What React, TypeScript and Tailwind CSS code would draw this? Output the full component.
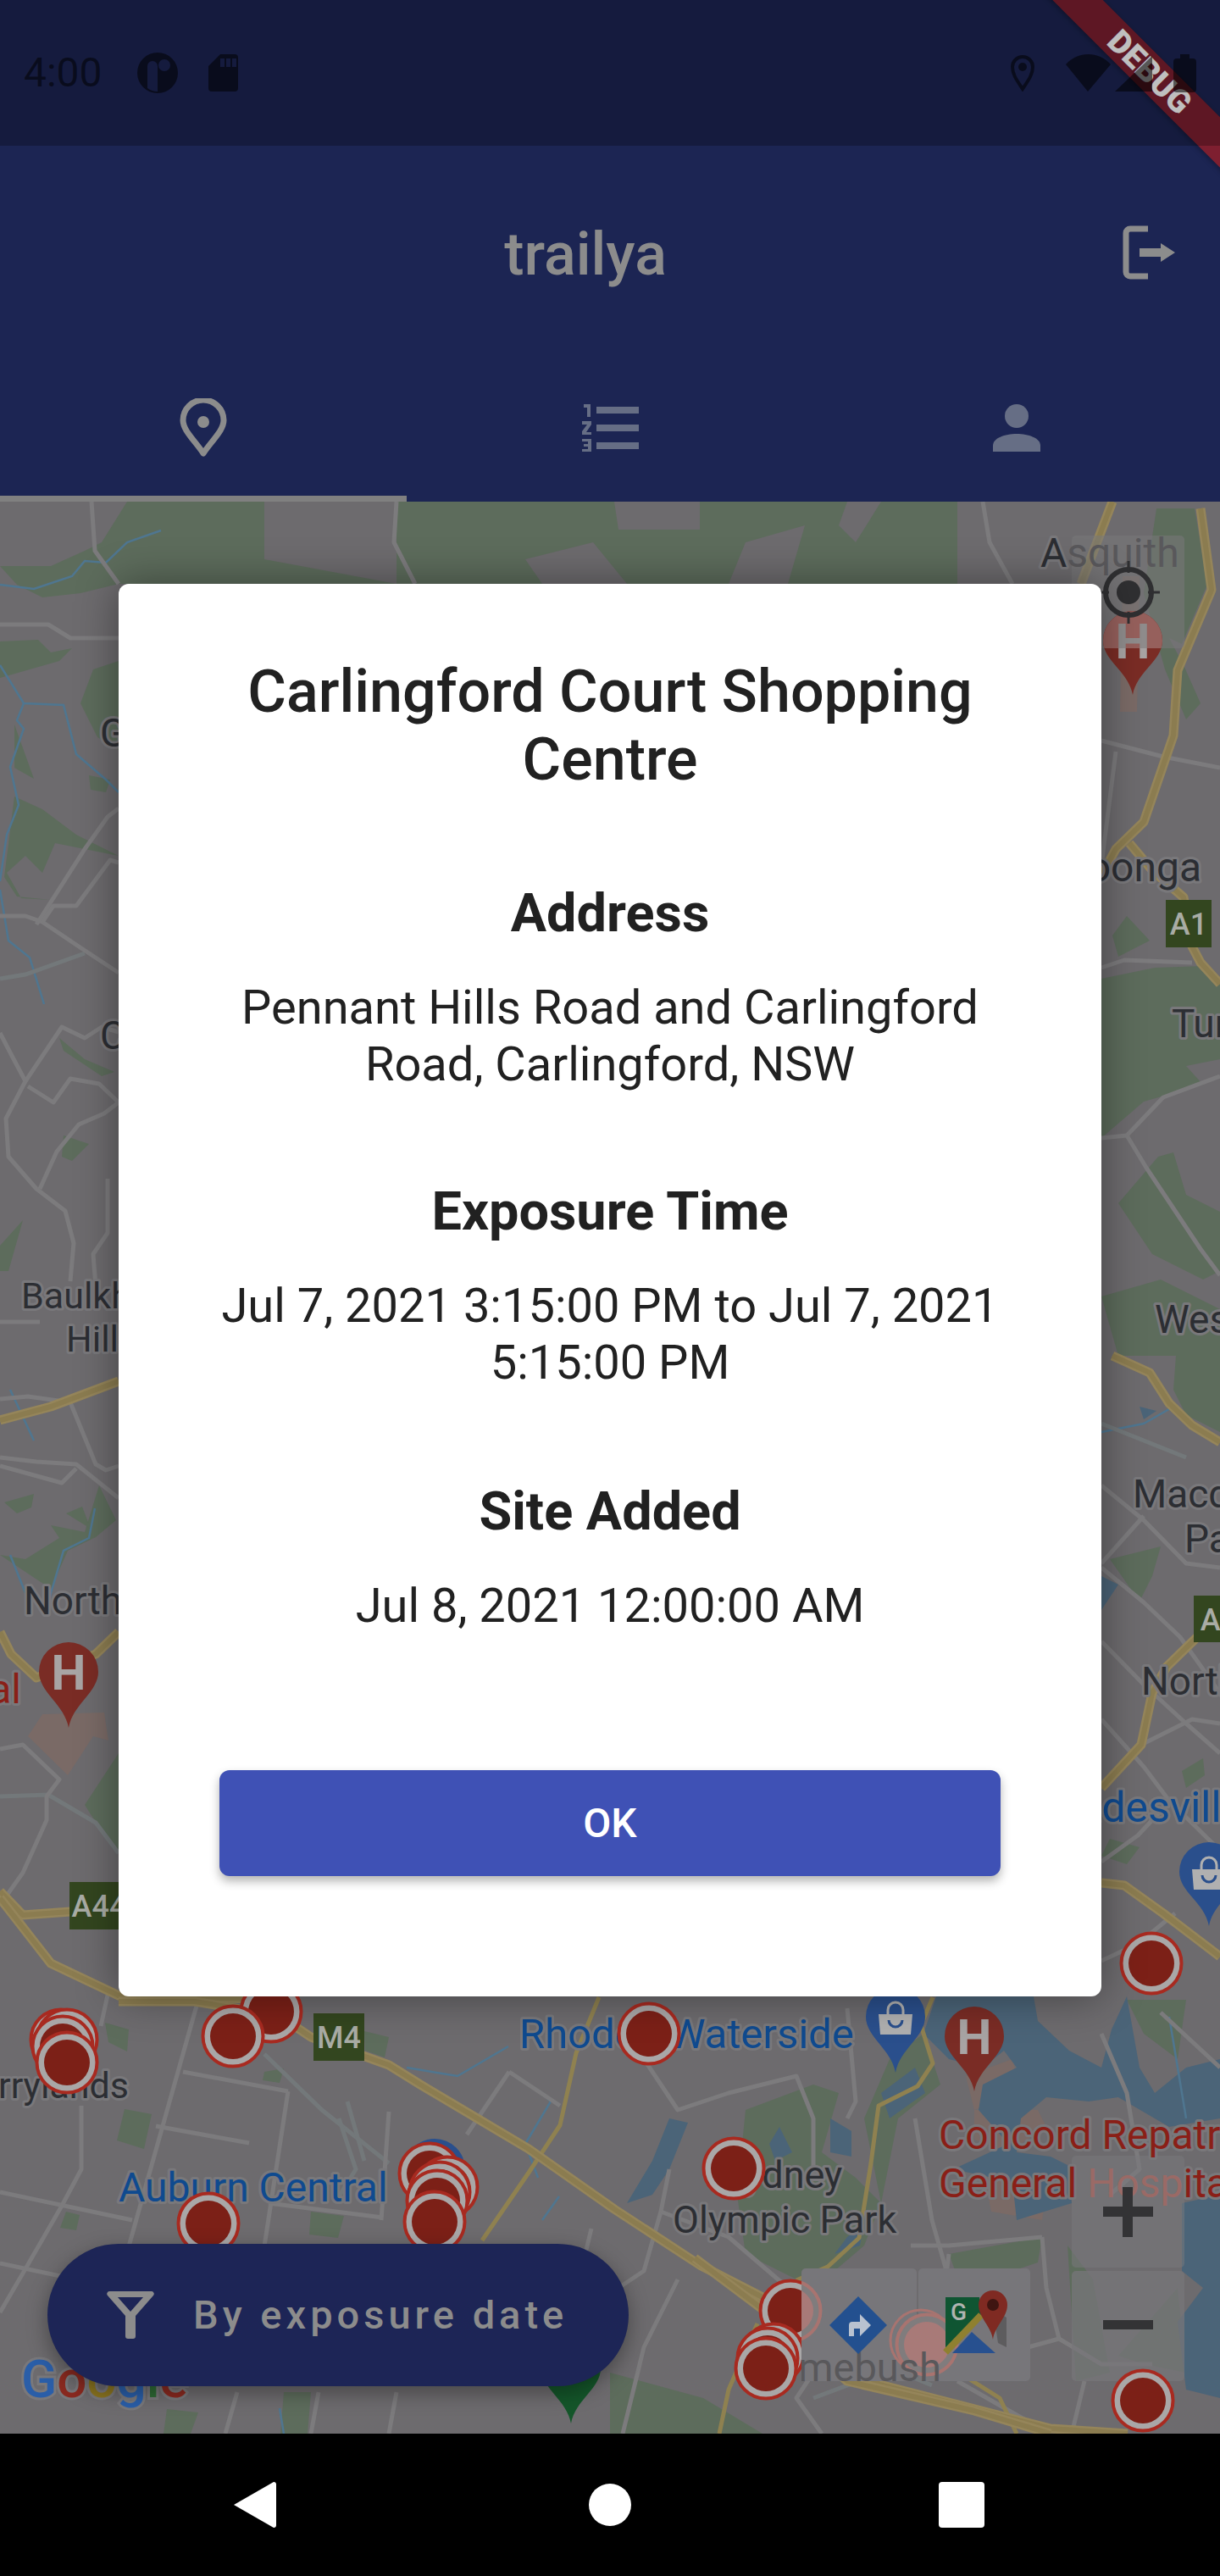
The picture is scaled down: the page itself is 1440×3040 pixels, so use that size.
const land = "#6d6b6e";
const road = "#7c7b7d";
const park = "#5d6c5c";
const water = "#4b6478";
const river = "#4f7690";
const hwyEdge = "#95855a";
const hwyFill = "#8b7c50";
const label = "#2c2e33";
const blueLabel = "#0f4a8f";
const redLabel = "#8a1f17";

const parks = [
  "150,592 312,592 312,660 468,689 140,689 95,700 50,705 20,690 0,668 60,668 100,650 120,640",
  "468,592 725,592 730,625 826,625 826,592 1130,592 1130,689 468,689",
  "0,757 45,755 60,770 85,765 70,780 35,790 0,800",
  "140,780 110,790 95,830 115,870 140,885",
  "17,855 40,919 17,906",
  "105,915 130,920 125,935 107,932",
  "17,940 50,955 90,985 140,1010 65,995 50,1030 30,1010 8,1030 25,1060 60,1062 20,1058 5,1035",
  "70,1225 100,1250 135,1265 120,1270 75,1240",
  "75,1340 105,1350 85,1370 73,1365",
  "0,1470 27,1440 10,1500 0,1500",
  "117,1753 137,1794 113,1814 80,1830 60,1875 0,1835 30,1840 70,1815 60,1800 100,1808",
  "5,1773 40,1763 37,1779 20,1786",
  "78,1786 97,1778 107,1804",
  "140,2069 100,2130 133,2182 140,2182",
  "1365,600 1410,600 1425,690 1395,760 1380,753 1397,785 1417,830 1400,849 1375,790 1350,700",
  "1313,1104 1330,1081 1357,1110 1320,1129",
  "1300,1155 1363,1142 1420,1140 1440,1160 1440,1250 1400,1258 1420,1280 1350,1300 1300,1343",
  "1367,1365 1385,1360 1400,1410 1440,1430 1440,1500 1420,1510 1360,1480 1320,1420",
  "1300,1530 1370,1510 1440,1545 1440,1600 1320,1600",
  "1388,1600 1440,1600 1440,1690 1400,1670 1385,1640",
  "1310,1840 1370,1825 1360,1860 1345,1890",
  "1395,2090 1420,2075 1422,2095 1400,2110",
  "1300,2190 1330,2200 1345,2180 1310,2170",
  "124,2387 152,2395 150,2421 128,2410",
  "147,2489 179,2495 170,2536 138,2526",
  "78,2610 94,2614 90,2632 71,2629",
  "367,2610 406,2615 399,2641 365,2637",
  "197,2843 234,2847 225,2872 193,2872",
  "335,2823 367,2823 363,2872 331,2872",
  "430,2397 459,2404 454,2428 431,2420",
  "312,2445 335,2441 330,2458 310,2455",
  "880,2490 960,2460 990,2470 970,2540 1010,2570 1040,2600 1020,2650 985,2680 940,2690 880,2660 870,2590",
  "1050,2430 1090,2400 1110,2460 1060,2500 1040,2600 1020,2500",
  "1120,2660 1230,2640 1225,2670 1135,2700",
  "1260,2650 1290,2690 1310,2800 1270,2810",
  "1320,2780 1390,2700 1400,2800 1350,2790",
  "720,2800 830,2830 900,2872 720,2872",
  "1330,2360 1400,2360 1390,2430 1350,2400",
];

// grey gaps in the bush along the top edge
const clearings = [
  "620,660 700,640 740,689 640,689",
  "880,640 950,620 930,689 860,689",
  "1000,592 1040,592 1010,640 990,620",
];

const waters = [
  "1105,2356 1220,2356 1225,2385 1262,2420 1300,2440 1312,2395 1330,2356 1345,2440 1363,2470 1400,2440 1440,2430 1440,2500 1380,2510 1320,2475 1285,2480 1235,2475 1205,2500 1200,2540 1240,2545 1260,2555 1265,2600 1200,2620 1195,2575 1125,2560 1190,2530 1155,2490 1160,2460 1200,2440 1185,2420 1160,2440 1120,2430 1090,2400",
  "1395,2600 1440,2590 1440,2830 1400,2820 1390,2740 1420,2700 1395,2680",
  "1040,2470 1080,2440 1092,2470 1050,2500",
  "980,2500 1005,2515 1005,2545 980,2540",
  "920,2510 935,2540 915,2550 908,2530",
  "790,2500 812,2505 790,2560 770,2590 740,2600 770,2550",
  "1000,2640 1020,2625 1015,2650 985,2660",
  "1300,1860 1320,1870 1300,1900",
  "1345,1660 1365,1665 1350,1675",
];

const pink = [
  "33,2049 50,2023 123,2021 128,2054 110,2049 80,2095",
  "1140,2450 1195,2430 1205,2470 1150,2490",
  "1150,2490 1225,2490 1235,2510 1190,2540 1150,2525",
  "1160,2560 1240,2550 1230,2620 1170,2610",
  "1325,680 1345,680 1342,840 1322,840",
];

const roads = [
  "0,737 57,737 83,753 140,753",
  "43,1091 100,1002 127,964 140,954",
  "0,1081 30,1081 50,1088 93,1117 140,1148",
  "50,1088 63,1069 90,1069 130,1015 140,1018",
  "0,1219 13,1244 30,1276 7,1320 10,1365 43,1403 77,1429 87,1467 83,1512",
  "30,1276 73,1212 100,1225 120,1212 140,1218",
  "33,1282 63,1301 83,1273 117,1279 140,1301",
  "47,1403 67,1359 93,1327 123,1314 140,1301",
  "127,1391 127,1455 110,1480 113,1518",
  "0,1560 47,1560",
  "0,1651 33,1648 83,1655 113,1728 125,1735 140,1730",
  "0,1720 43,1725 90,1728 140,1768",
  "0,1730 73,1750 90,1733",
  "0,2064 27,2059 70,2100 55,2120 55,2148 27,2210 0,2248",
  "108,592 112,650 140,689",
  "468,592 465,640 490,689",
  "1160,592 1168,640 1195,689",
  "1300,874 1373,893 1440,906",
  "1317,887 1300,1021",
  "1300,1142 1327,1133 1407,1136",
  "1300,1343 1330,1340 1353,1378 1383,1423 1417,1474 1440,1505",
  "1330,1340 1373,1295 1440,1270",
  "1300,1753 1350,1794 1400,1845 1440,1850",
  "1300,1850 1350,1891 1393,1932 1440,1998",
  "1300,1937 1350,1988 1400,2034 1440,2069",
  "1350,1789 1300,1845",
  "1347,2059 1407,2029 1440,2034",
  "1300,2029 1350,2085 1380,2125 1433,2177",
  "1300,2197 1343,2166 1377,2130",
  "1300,2314 1343,2294 1387,2258",
  "216,2445 340,2468",
  "184,2509 294,2529",
  "340,2468 312,2651",
  "234,2360 152,2651 142,2700",
  "0,2587 156,2620",
  "317,2600 452,2617",
  "0,2671 90,2690",
  "96,2485 96,2560 73,2603 28,2681 0,2729",
  "128,2350 119,2391",
  "601,2445 551,2519",
  "601,2445 661,2485",
  "459,2492 450,2620",
  "698,2630 684,2688",
  "280,2823 266,2872",
  "376,2823 367,2872",
  "468,2823 459,2872",
  "720,2400 760,2430 800,2490 860,2470 940,2450 960,2500 960,2560",
  "790,2560 780,2610 760,2680 730,2700",
  "780,2610 860,2640 930,2700",
  "1000,2370 1010,2480 1000,2500",
  "1080,2500 1100,2620 1120,2690 1150,2790",
  "1075,2650 1120,2650 1230,2640",
  "1120,2660 1115,2700",
  "1230,2640 1235,2700 1250,2760 1300,2790 1360,2790",
  "1250,2760 1140,2790",
  "1280,2810 1265,2872",
  "1300,2400 1330,2470 1345,2560 1310,2590",
  "1370,2375 1440,2440",
  "1130,2810 1200,2850 1240,2872",
  "800,2690 760,2770 735,2872",
  "960,2800 940,2830 970,2872",
];

const highways = [
  "0,1676 60,1660 140,1630",
  "0,1926 13,1952 43,1980 113,1952 140,1926",
  "0,2232 27,2260 83,2256",
  "0,2240 60,2317 140,2355 300,2359 367,2404 459,2437 496,2460 624,2536 725,2607 826,2673 900,2711 1038,2814 1240,2866 1331,2872",
  "140,2362 230,2362 290,2372",
  "1417,600 1430,696 1390,791 1385,868 1350,970 1317,1002 1300,1034",
  "1333,995 1360,1027 1397,1059 1407,1117 1417,1136 1440,1161",
  "1313,592 1276,689",
  "1313,1600 1357,1620 1380,1656 1407,1682 1440,1702",
  "1413,1932 1377,1967 1360,1998 1347,2059 1300,2110",
  "1300,2222 1327,2225 1373,2258 1440,2309",
  "820,2665 900,2725 1000,2810 1150,2845 1240,2872",
];

const thinYellow = [
  "707,2357 680,2423 661,2508 624,2564 569,2644",
  "1101,2357 1087,2390 1101,2435 1083,2462 1037,2485 1028,2553 1014,2641 977,2675 940,2691",
  "849,2872 860,2820 894,2742",
  "1100,2780 1180,2830 1200,2872",
];

const rivers = [
  "0,690 40,695 85,680 100,662 125,664 150,640 190,626",
  "0,785 28,830 75,832 90,890 125,920 140,935",
  "28,830 20,850 28,860 12,905 22,950 8,985 0,1040",
  "0,1050 10,1110 35,1130 52,1185",
  "12,1640 40,1700",
  "112,1780 105,1815 75,1830 60,1880 58,1890",
  "12,1835 30,1880",
  "1220,2230 1300,2140",
  "1300,1690 1350,1680 1385,1660",
  "640,2470 650,2480 620,2530 635,2570",
  "370,2720 360,2790",
  "330,2842 335,2872",
  "600,2415 540,2450 480,2440",
  "1380,2380 1400,2500",
  "660,2592 640,2620",
];

const rails = [
  "0,2120 57,2118 113,2151 140,2187",
  "312,2424 380,2490 459,2553",
  "400,2500 420,2560 395,2600",
  "410,2480 430,2550",
  "1300,1680 1400,1720",
  "0,1155 30,1150 100,1125",
  "1000,2800 1040,2790 1100,2815",
  "960,2830 1040,2800",
];

const pins: [number, number][] = [
  [1359, 2317], [72, 2407], [79, 2407], [74, 2415], [79, 2434],
  [320, 2374], [275, 2403], [766, 2400], [246, 2624],
  [507, 2565], [528, 2581], [519, 2587], [516, 2597], [513, 2622],
  [866, 2559], [933, 2727], [913, 2778], [906, 2783], [904, 2795],
  [1349, 2833],
];

function Pin({ p }: { p: [number, number] }) {
  return (
    <g>
      <circle cx={p[0]} cy={p[1]} r={35.5} fill="#a9a7a7" stroke="#a82a20" strokeWidth={4} />
      <circle cx={p[0]} cy={p[1]} r={27} fill="#7c2017" />
    </g>
  );
}

function FadedPin({ x, y }: { x: number; y: number }) {
  return (
    <g>
      <circle cx={x} cy={y} r={35.5} fill="#807c7d" stroke="#a87470" strokeWidth={4} />
      <circle cx={x} cy={y} r={27} fill="#a87a78" />
    </g>
  );
}

function Drop({ x, top, tip, fill }: { x: number; top: number; tip: number; fill: string }) {
  const r = 35;
  const cy = top + r;
  return (
    <path
      d={`M${x} ${tip} C${x - 5} ${tip - 28} ${x - r} ${cy + 24} ${x - r} ${cy} A${r} ${r} 0 1 1 ${x + r} ${cy} C${x + r} ${cy + 24} ${x + 5} ${tip - 28} ${x} ${tip}Z`}
      fill={fill}
    />
  );
}

function HospitalPin({ x, top, tip }: { x: number; top: number; tip: number }) {
  return (
    <g>
      <Drop x={x} top={top} tip={tip} fill="#7a2c25" />
      <text x={x} y={top + 56} textAnchor="middle" fontSize={58} fontWeight={700} fill="#a8a4a4">H</text>
    </g>
  );
}

function BagPin({ x, top, tip }: { x: number; top: number; tip: number }) {
  const y = top + 18;
  return (
    <g>
      <Drop x={x} top={top} tip={tip} fill="#2a4f8c" />
      <path d={`M${x - 20} ${y + 14} H${x + 20} L${x + 18} ${y + 38} H${x - 18}Z`} fill="#b0b0b0" />
      <path d={`M${x - 9} ${y + 14} V${y + 9} a9 9 0 0 1 18 0 V${y + 14}`} fill="none" stroke="#b0b0b0" strokeWidth={3} />
      <path d={`M${x - 8} ${y + 21} a8 8 0 0 0 16 0`} fill="none" stroke="#2a4f8c" strokeWidth={3} />
    </g>
  );
}

function Shield({ x, y, w, h, text }: { x: number; y: number; w: number; h: number; text: string }) {
  return (
    <g>
      <rect x={x} y={y} width={w} height={h} fill="#33461f" />
      <text x={x + w / 2} y={y + h / 2 + 13} textAnchor="middle" fontSize={36} fontWeight={500} fill="#a9aca5">{text}</text>
    </g>
  );
}

function MapText({ x, y, size = 46, fill = label, anchor, children }: { x: number; y: number; size?: number; fill?: string; anchor?: "middle" | "end"; children: React.ReactNode }) {
  return (
    <text x={x} y={y} fill={fill} textAnchor={anchor} fontSize={size} stroke="#79787b" strokeWidth={6} paintOrder="stroke" strokeLinejoin="round">
      {children}
    </text>
  );
}

function MapDrawing() {
  return (
    <svg viewBox="0 592 1440 2280" className="block h-full w-full font-[Roboto,sans-serif]">
      <defs>
        <clipPath id="tools">
          <rect x="946" y="2677" width="270" height="133" />
        </clipPath>
        <clipPath id="locate">
          <rect x="1265" y="632" width="133" height="133" />
        </clipPath>
      </defs>
      <rect x="0" y="592" width="1440" height="2280" fill={land} />
      {parks.map((p) => <polygon key={p} points={p} fill={park} />)}
      {clearings.map((p) => <polygon key={p} points={p} fill={land} />)}
      {pink.map((p) => <polygon key={p} points={p} fill="#7a6a66" />)}
      {waters.map((p) => <polygon key={p} points={p} fill={water} />)}
      {rivers.map((p) => <polyline key={p} points={p} fill="none" stroke={river} strokeWidth={2.5} />)}
      {rails.map((p) => <polyline key={p} points={p} fill="none" stroke="#73787a" strokeWidth={5} />)}
      {roads.map((p) => <polyline key={p} points={p} fill="none" stroke={road} strokeWidth={5} strokeLinejoin="round" />)}
      {thinYellow.map((p) => <polyline key={p} points={p} fill="none" stroke="#8f8150" strokeWidth={5} strokeLinejoin="round" />)}
      {highways.map((p) => (
        <g key={p}>
          <polyline points={p} fill="none" stroke={hwyEdge} strokeWidth={11} strokeLinejoin="round" />
          <polyline points={p} fill="none" stroke={hwyFill} strokeWidth={6} strokeLinejoin="round" />
        </g>
      ))}

      <Shield x={82} y={2221} w={70} h={56} text="A44" />
      <Shield x={370} y={2376} w={60} h={56} text="M4" />
      <Shield x={1376} y={1062} w={54} h={56} text="A1" />
      <Shield x={1409} y={1883} w={60} h={55} text="A3" />

      {/* translucent control backs go under the labels so the faded words stay readable */}
      <rect x="1265" y="632" width="133" height="133" rx="5" fill="#78787a" fillOpacity={0.55} />
      <rect x="1265" y="2544" width="133" height="132" rx="5" fill="#79787b" fillOpacity={0.55} />
      <rect x="1265" y="2680" width="133" height="130" rx="5" fill="#77767a" fillOpacity={0.75} />

      <MapText x={118} y={881}>G</MapText>
      <MapText x={118} y={1238}>C</MapText>
      <MapText x={25} y={1544} size={43}>Baulkham</MapText>
      <MapText x={78} y={1595} size={43}>Hills</MapText>
      <MapText x={28} y={1905}>Northmead</MapText>
      <MapText x={25} y={2010} size={48} fill={redLabel} anchor="end">Hospital</MapText>
      <MapText x={1228} y={669} size={48}>
        <tspan>A</tspan>
        <tspan fill="#59585b" stroke="none">squith</tspan>
      </MapText>
      <MapText x={1418} y={1040} size={48} anchor="end">Wahroonga</MapText>
      <MapText x={1383} y={1224}>Turramurra</MapText>
      <MapText x={1363} y={1573}>West</MapText>
      <MapText x={1337} y={1779}>Macquarie</MapText>
      <MapText x={1398} y={1832}>Park</MapText>
      <MapText x={1347} y={2000}>North Ryde</MapText>
      <MapText x={1227} y={2150} size={50} fill={blueLabel}>Gladesville</MapText>
      <MapText x={152} y={2476} size={43} anchor="end">Merrylands</MapText>
      <MapText x={140} y={2598} size={48} fill={blueLabel}>Auburn Central</MapText>
      <MapText x={613} y={2417} size={49} fill={blueLabel}>Rhodes Waterside</MapText>
      <MapText x={923} y={2582} size={45} anchor="middle">Sydney</MapText>
      <MapText x={794} y={2635} size={45}>Olympic Park</MapText>
      <MapText x={1108} y={2536} size={48} fill={redLabel}>Concord Repatriation</MapText>
      <MapText x={1108} y={2593} size={48} fill={redLabel}>
        <tspan>General </tspan>
        <tspan fill="#9a6a66" stroke="none">Hosp</tspan>
        <tspan>ital</tspan>
      </MapText>

      <text x={25} y={2829} fontSize={62} fontWeight={500} stroke="#79787b" strokeWidth={6} paintOrder="stroke">
        <tspan fill="#2a5ea8">G</tspan>
        <tspan fill="#8a2a20">o</tspan>
        <tspan fill="#8a7420">o</tspan>
        <tspan fill="#2a5ea8">g</tspan>
        <tspan fill="#2e6a35">l</tspan>
        <tspan fill="#8a2a20">e</tspan>
      </text>

      <circle cx={513} cy={2560} r={36} fill="#2a4f8c" />
      {pins.map((p) => <Pin key={p.join()} p={p} />)}
      <HospitalPin x={81} top={1938} tip={2039} />
      <HospitalPin x={1150} top={2368} tip={2468} />
      <HospitalPin x={1337} top={721} tip={820} />
      <BagPin x={1057} top={2345} tip={2446} />
      <BagPin x={1427} top={2174} tip={2273} />
      <Drop x={674} top={2760} tip={2860} fill="#14562a" />

      {/* markers under a map control show through washed out */}
      <g clipPath="url(#locate)">
        <Drop x={1337} top={721} tip={820} fill="#96605c" />
        <text x={1337} y={777} textAnchor="middle" fontSize={58} fontWeight={700} fill="#8f8c8c">H</text>
      </g>
      <circle cx={1332} cy={699} r={27} fill="none" stroke="#2f2f31" strokeWidth={6} />
      <circle cx={1332} cy={699} r={14} fill="#2f2f31" />
      <path d="M1332 662 V676 M1332 722 V736 M1295 699 H1309 M1355 699 H1369" stroke="#2f2f31" strokeWidth={3} />

      <rect x="946" y="2677" width="136" height="133" rx="5" fill="#77767a" />
      <rect x="1084" y="2677" width="132" height="133" rx="5" fill="#77767a" />
      <g clipPath="url(#tools)">
        <FadedPin x={933} y={2727} />
        <circle cx={1087} cy={2762} r={36} fill="none" stroke="#a87470" strokeWidth={3} />
        <FadedPin x={1094} y={2767} />
        <text x={882} y={2810} fontSize={47} fill="#59585b">Homebush</text>
      </g>
      <path d="M1013 2710 L1047 2744 L1013 2778 L979 2744Z" fill="#23508f" />
      <path d="M1002 2757 V2744 q0-4 4-4 h9 v-9 l13 13 -13 13 v-9 h-7 v9Z" fill="#b9c2d0" />
      <path d="M1116 2711 H1156 L1158 2732 L1116 2776Z" fill="#0f5532" />
      <path d="M1116 2776 L1158 2732" stroke="#8f8030" strokeWidth={8} />
      <path d="M1124 2777 L1147 2752 L1175 2777Z" fill="#27508f" />
      <path d="M1172 2725 L1188 2735 L1188 2770 L1178 2765Z" fill="#5d5c5e" />
      <path d="M1172 2761 C1170 2745 1155 2735 1155 2720 A17 17 0 0 1 1189 2720 C1189 2735 1174 2745 1172 2761Z" fill="#7f2a22" />
      <circle cx={1172} cy={2720} r={7} fill="#3f1511" />
      <text x={1122} y={2738} fontSize={28} fontWeight={500} fill="#b0b4b0">G</text>

      <path d="M1325 2581 H1337 V2604 H1361 V2616 H1337 V2640 H1325 V2616 H1302 V2604 H1325Z" fill="#333335" />
      <rect x="1302" y="2738" width="59" height="11" fill="#333335" />
    </svg>
  );
}

function MapPinOutline() {
  return (
    <svg viewBox="0 0 56 70" className="h-[70px] w-[56px]">
      <path d="M28 65 C18 50 4 38 4 26 A24 24 0 0 1 52 26 C52 38 38 50 28 65Z" fill="none" stroke="#8c8c8c" strokeWidth={7} strokeLinejoin="round" />
      <circle cx={28} cy={28} r={7} fill="#8c8c8c" />
    </svg>
  );
}

function NumberedList() {
  return (
    <svg viewBox="0 0 68 56" className="h-[56px] w-[68px]" fill="#666e85">
      <rect x="18" y="3" width="50" height="8" />
      <rect x="18" y="24" width="50" height="8" />
      <rect x="18" y="45" width="50" height="8" />
      <path d="M3 0 H11 V15 H7 V4 H3Z" />
      <path d="M1 20 H12 V24 L6 33 H12 V36 H1 V32 L7 24 H1Z" />
      <path d="M1 41 H12 V56 H1 V53 H8 V50 H3 V47 H8 V44 H1Z" />
    </svg>
  );
}

function Person() {
  return (
    <svg viewBox="0 0 56 56" className="h-[56px] w-[56px]" fill="#666e85">
      <ellipse cx={28} cy={14} rx={14} ry={14} />
      <path d="M0 56 V49 C0 40 14 35 28 35 C42 35 56 40 56 49 V56Z" />
    </svg>
  );
}

function LogoutIcon() {
  return (
    <svg viewBox="0 0 62 64" className="h-[64px] w-[62px]">
      <path d="M30 4 H9 a5 5 0 0 0-5 5 V55 a5 5 0 0 0 5 5 H30" fill="none" stroke="#8c8c8c" strokeWidth={7} />
      <path d="M20 27 H45 V21 L62 32 L45 43 V37 H20Z" fill="#8c8c8c" />
    </svg>
  );
}

function FunnelIcon() {
  return (
    <svg viewBox="0 0 56 56" className="h-[56px] w-[56px]">
      <path
        fillRule="evenodd"
        d="M3 0 H53 a3 3 0 0 1 2 5 L34 29 V53 a3 3 0 0 1-3 3 H25 a3 3 0 0 1-3-3 V29 L1 5 a3 3 0 0 1 2-5Z M13 7 L28 24 L43 7Z"
        fill="#8c8c8c"
      />
    </svg>
  );
}

function StatusBar() {
  const ink = "rgba(0,0,0,0.55)";
  return (
    <div className="absolute left-0 top-0 flex h-[172px] w-full items-center bg-black/25 pl-[28px] pr-[28px]">
      <span className="text-[48px] leading-none text-black/55">4:00</span>
      <svg viewBox="0 0 48 48" className="ml-[41px] h-[48px] w-[48px]">
        <path fill={ink} fillRule="evenodd" d="M24 0 A24 24 0 1 0 24 48 A24 24 0 1 0 24 0Z M18 10 A6 6 0 0 0 12 16 V42 A22 22 0 0 0 24 46 V16 A6 6 0 0 0 18 10Z M32 8 A7 7 0 1 0 32 22 A7 7 0 1 0 32 8Z" />
      </svg>
      <svg viewBox="0 0 35 44" className="ml-[36px] h-[44px] w-[35px]">
        <path fill={ink} fillRule="evenodd" d="M14 0 H31 a4 4 0 0 1 4 4 V40 a4 4 0 0 1-4 4 H4 a4 4 0 0 1-4-4 V14Z M14 5 V15 H19 V5Z M21 5 V15 H26 V5Z M28 5 V15 H33 V5Z" />
      </svg>
      <div className="flex-1" />
      <svg viewBox="0 0 30 44" className="h-[44px] w-[30px]">
        <path d="M15 41 C10 33 3 25 3 15 A12 12 0 0 1 27 15 C27 25 20 33 15 41Z" fill="none" stroke={ink} strokeWidth={4} />
        <circle cx={15} cy={15} r={5} fill={ink} />
      </svg>
      <svg viewBox="0 0 106 44" className="ml-[36px] h-[44px] w-[106px]">
        <path fill={ink} d="M0 12 C14 -4 39 -4 53 12 L26 44Z" />
        <path fill={ink} d="M58 44 L102 2 V44Z" />
      </svg>
      <svg viewBox="0 0 27 45" className="ml-[21px] h-[45px] w-[27px]">
        <path fill={ink} d="M8 0 H19 V5 H23 a4 4 0 0 1 4 4 V41 a4 4 0 0 1-4 4 H4 a4 4 0 0 1-4-4 V9 a4 4 0 0 1 4-4 H8Z" />
      </svg>
    </div>
  );
}

function Section({ title, children, className }: { title: string; children: React.ReactNode; className: string }) {
  return (
    <div className={className}>
      <h3 className="text-[63px] font-bold leading-[70px]">{title}</h3>
      <p className="mt-[43px] text-[56px] leading-[67px]">{children}</p>
    </div>
  );
}

export default function App() {
  return (
    <div className="relative flex h-[3040px] w-[1440px] flex-col overflow-hidden bg-black font-[Roboto,sans-serif]">
      <header className="h-[592px] bg-[#1c2553] pt-[172px]">
        <div className="relative flex h-[248px] items-center justify-center">
          <h1 className="mr-[58px] mt-[8px] text-[70px] font-medium leading-none text-[#8c8c8c]">trailya</h1>
          <div className="absolute right-[53px] top-[94px]">
            <LogoutIcon />
          </div>
        </div>
        <div className="grid h-[172px] grid-cols-3">
          <div className="flex items-center justify-center border-b-[7px] border-[#808080] pt-[4px]">
            <MapPinOutline />
          </div>
          <div className="flex items-center justify-center pb-[2px]">
            <NumberedList />
          </div>
          <div className="flex items-center justify-center pb-[2px]">
            <Person />
          </div>
        </div>
      </header>

      <main className="relative h-[2280px]">
        <MapDrawing />
        <button className="absolute left-[56px] top-[2056px] flex h-[168px] w-[686px] items-center gap-[46px] rounded-full bg-[#1d2556] pl-[70px] shadow-[0_8px_24px_rgba(0,0,0,0.35)]">
          <FunnelIcon />
          <span className="text-[47px] font-medium tracking-[5px] text-[#8c8c8c]">By exposure date</span>
        </button>
      </main>

      <nav className="flex h-[168px] items-center bg-black pl-[275px]">
        <svg viewBox="0 0 51 56" className="h-[56px] w-[51px]">
          <path d="M48 1 a3 3 0 0 1 3 3 V52 a3 3 0 0 1-3 3 L1 28Z" fill="#fff" />
        </svg>
        <span className="ml-[369px] h-[50px] w-[50px] rounded-full bg-white" />
        <span className="ml-[363px] h-[54px] w-[54px] rounded-[4px] bg-white" />
      </nav>

      <div className="absolute left-[140px] top-[689px] flex w-[1160px] flex-col rounded-[12px] bg-white px-[119px] pb-[142px] pt-[87px] text-center text-[#212121] shadow-[0_0_50px_rgba(0,0,0,0.4)]">
        <h2 className="text-[70px] font-medium leading-[80px]">Carlingford Court Shopping Centre</h2>
        <Section title="Address" className="mt-[107px]">Pennant Hills Road and Carlingford Road, Carlingford, NSW</Section>
        <Section title="Exposure Time" className="mt-[105px]">Jul 7, 2021 3:15:00 PM to Jul 7, 2021 5:15:00 PM</Section>
        <Section title="Site Added" className="mt-[107px]">Jul 8, 2021 12:00:00 AM</Section>
        <button className="mt-[160px] h-[125px] rounded-[12px] bg-[#3f51b5] text-[48px] font-medium text-white shadow-[0_6px_12px_rgba(0,0,0,0.3)]">OK</button>
      </div>

      <div className="absolute left-[1157px] top-[64px] flex h-[42px] w-[400px] rotate-45 items-center justify-center bg-[#b71c1c]/[.63] text-[38px] font-black leading-none text-white shadow-[0_2px_6px_rgba(0,0,0,0.3)]">
        DEBUG
      </div>

      <StatusBar />
    </div>
  );
}
